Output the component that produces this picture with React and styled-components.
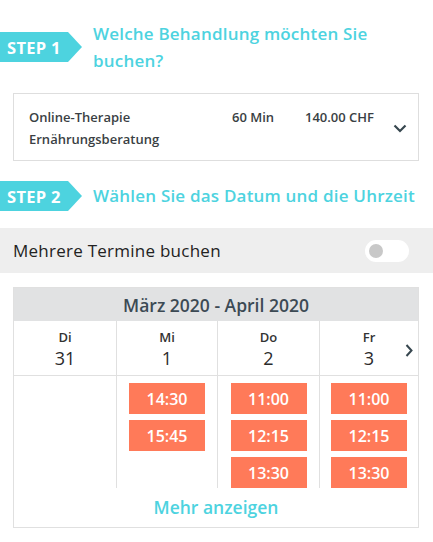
import styled, { createGlobalStyle } from "styled-components";

const GlobalStyle = createGlobalStyle`
  body {
    margin: 0;
    background: #ffffff;
    font-family: "Open Sans", "Noto Sans", sans-serif;
    color: #333;
  }
`;

const CYAN = "#4dd3df";
const ORANGE = "#ff7a59";

const Page = styled.div`
  width: 433px;
  padding-bottom: 12px;
`;

const StepRow = styled.div`
  display: flex;
  align-items: center;
  gap: 11px;
  margin-top: ${(p) => p.$top}px;
`;

const StepBadge = styled.div`
  flex: 0 0 82px;
  height: 30px;
  box-sizing: border-box;
  padding-left: 7px;
  display: flex;
  align-items: center;
  background: ${CYAN};
  color: #fff;
  font-size: 16.5px;
  font-weight: 700;
  letter-spacing: 0.3px;
  clip-path: polygon(0 0, 68px 0, 82px 50%, 68px 100%, 0 100%);
`;

const StepTitle = styled.h2`
  margin: 0;
  font-size: 17px;
  font-weight: 600;
  letter-spacing: 0.2px;
  line-height: ${(p) => (p.$multi ? 27 : 24)}px;
  color: ${CYAN};
`;

const ServiceCard = styled.div`
  margin: 19px 14px 0 13px;
  border: 1px solid #dedede;
  padding: 12px 11px 10px 15px;
  display: flex;
  align-items: flex-start;
  font-size: 13px;
  font-weight: 600;
  line-height: 22px;
  color: #3a3f44;
`;

const ServiceName = styled.div`
  flex: 1;
`;

const ServiceCell = styled.div`
  width: ${(p) => p.$w}px;
`;

const ChevronBox = styled.div`
  align-self: center;
  display: flex;
  color: #37474f;
`;

const ToggleBar = styled.div`
  margin-top: 17px;
  height: 45px;
  background: #eeeeee;
  display: flex;
  align-items: center;
  justify-content: space-between;
  padding: 0 24px 0 13px;
  font-size: 17px;
  letter-spacing: 0.25px;
  color: #222;
`;

const Switch = styled.div`
  width: 44px;
  height: 22px;
  border-radius: 11px;
  background: #fff;
  display: flex;
  align-items: center;
  padding-left: 4px;
  box-sizing: border-box;

  &::before {
    content: "";
    width: 14px;
    height: 14px;
    border-radius: 50%;
    background: #c8c8c8;
  }
`;

const Calendar = styled.div`
  position: relative;
  margin: 14px 14px 0 13px;
  border: 1px solid #e0e0e0;
`;

const CalHeader = styled.div`
  height: 33px;
  background: #e1e2e3;
  display: flex;
  align-items: center;
  justify-content: center;
  font-size: 17.5px;
  font-weight: 600;
  color: #3c4a54;
`;

const Days = styled.div`
  display: grid;
  grid-template-columns: 102px 101px 102px 1fr;
`;

const DayCol = styled.div`
  border-left: ${(p) => (p.$first ? "none" : "1px solid #e0e0e0")};
  display: flex;
  flex-direction: column;
`;

const DayHead = styled.div`
  height: 54px;
  border-bottom: 1px solid #e0e0e0;
  display: flex;
  flex-direction: column;
  align-items: center;
  justify-content: center;
  color: #333;
`;

const DayName = styled.div`
  font-size: 13px;
  font-weight: 600;
  line-height: 18px;
  margin-top: 1px;
`;

const DayNum = styled.div`
  font-size: 18px;
  font-weight: 500;
  line-height: 24px;
  color: #2b2b2b;
`;

const Slots = styled.div`
  display: flex;
  flex-direction: column;
  align-items: center;
  gap: 6px;
  padding-top: 7px;
  min-height: 104px;
`;

const Slot = styled.button`
  width: 76px;
  height: 31px;
  border: none;
  background: ${ORANGE};
  color: #fff;
  font-family: inherit;
  font-size: 16px;
  font-weight: 600;
  padding: 0;
  cursor: pointer;
`;

const NextArrow = styled.div`
  position: absolute;
  right: 5px;
  top: 56px;
  display: flex;
  color: #37474f;
`;

const MoreLink = styled.div`
  text-align: center;
  font-size: 17.5px;
  font-weight: 600;
  line-height: 39px;
  color: ${CYAN};
`;

const ChevronDown = () => (
  <svg width="14" height="9" viewBox="0 0 14 9" fill="none">
    <path d="M1.5 1.5 L7 7 L12.5 1.5" stroke="currentColor" strokeWidth="2.2" />
  </svg>
);

const ChevronRight = () => (
  <svg width="8" height="13" viewBox="0 0 8 13" fill="none">
    <path d="M1.5 1 L6.5 6.5 L1.5 12" stroke="currentColor" strokeWidth="2" />
  </svg>
);

const days = [
  { name: "Di", num: "31", slots: [] },
  { name: "Mi", num: "1", slots: ["14:30", "15:45"] },
  { name: "Do", num: "2", slots: ["11:00", "12:15", "13:30"] },
  { name: "Fr", num: "3", slots: ["11:00", "12:15", "13:30"] },
];

const App = () => (
  <Page>
    <GlobalStyle />
    <StepRow $top={20}>
      <StepBadge>STEP 1</StepBadge>
      <StepTitle $multi>
        Welche Behandlung möchten Sie
        <br />
        buchen?
      </StepTitle>
    </StepRow>

    <ServiceCard>
      <ServiceName>
        Online-Therapie
        <br />
        Ernährungsberatung
      </ServiceName>
      <ServiceCell $w={73}>60 Min</ServiceCell>
      <ServiceCell $w={88}>140.00 CHF</ServiceCell>
      <ChevronBox>
        <ChevronDown />
      </ChevronBox>
    </ServiceCard>

    <StepRow $top={20}>
      <StepBadge>STEP 2</StepBadge>
      <StepTitle>Wählen Sie das Datum und die Uhrzeit</StepTitle>
    </StepRow>

    <ToggleBar>
      <span>Mehrere Termine buchen</span>
      <Switch />
    </ToggleBar>

    <Calendar>
      <CalHeader>März 2020 - April 2020</CalHeader>
      <Days>
        {days.map((d, i) => (
          <DayCol key={d.name} $first={i === 0}>
            <DayHead>
              <DayName>{d.name}</DayName>
              <DayNum>{d.num}</DayNum>
            </DayHead>
            <Slots>
              {d.slots.map((s) => (
                <Slot key={s}>{s}</Slot>
              ))}
            </Slots>
          </DayCol>
        ))}
      </Days>
      <NextArrow>
        <ChevronRight />
      </NextArrow>
      <MoreLink>Mehr anzeigen</MoreLink>
    </Calendar>
  </Page>
);

export default App;
